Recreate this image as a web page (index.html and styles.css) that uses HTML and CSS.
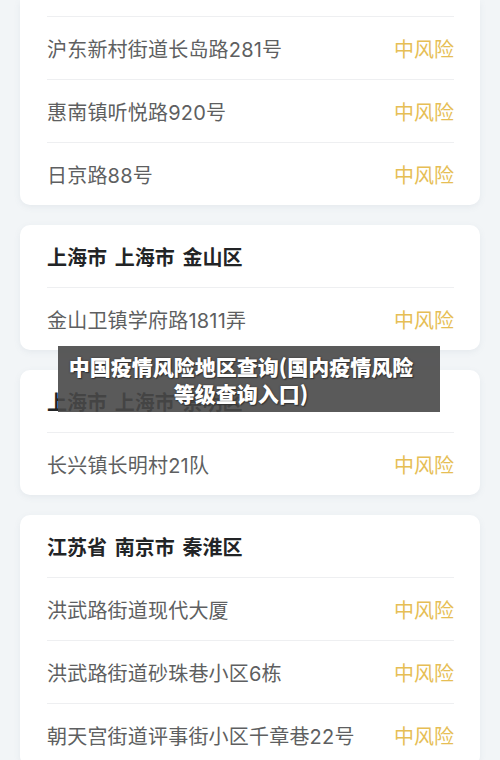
FILE: index.html
```html
<!DOCTYPE html>
<html lang="zh-CN">
<head>
<meta charset="utf-8">
<title>中国疫情风险地区查询</title>
<link rel="stylesheet" href="styles.css">
</head>
<body>
<main class="page">
  <section class="card card-cut">
    <div class="row"><span class="addr">沪东新村街道长岛路281号</span><span class="risk">中风险</span></div>
    <div class="row"><span class="addr">惠南镇听悦路920号</span><span class="risk">中风险</span></div>
    <div class="row"><span class="addr">日京路88号</span><span class="risk">中风险</span></div>
  </section>

  <section class="card">
    <h2 class="region">上海市 上海市 金山区</h2>
    <div class="row"><span class="addr">金山卫镇学府路1811弄</span><span class="risk">中风险</span></div>
  </section>

  <section class="card">
    <h2 class="region">上海市 上海市 崇明区</h2>
    <div class="row"><span class="addr">长兴镇长明村21队</span><span class="risk">中风险</span></div>
  </section>

  <section class="card">
    <h2 class="region">江苏省 南京市 秦淮区</h2>
    <div class="row"><span class="addr">洪武路街道现代大厦</span><span class="risk">中风险</span></div>
    <div class="row"><span class="addr">洪武路街道砂珠巷小区6栋</span><span class="risk">中风险</span></div>
    <div class="row"><span class="addr">朝天宫街道评事街小区千章巷22号</span><span class="risk">中风险</span></div>
  </section>

  <div class="caption">中国疫情风险地区查询(国内疫情风险等级查询入口)</div>
</main>
</body>
</html>
```

FILE: styles.css
```css
html, body {
  margin: 0;
  padding: 0;
  background: #f2f5f7;
}

body {
  font-family: Inter, "Noto Sans CJK SC", "Noto Sans", sans-serif;
  overflow: hidden;
}

.page {
  position: relative;
  display: flex;
  flex-direction: column;
  gap: 20px;
  padding: 0 20px;
  height: 760px;
}

.card {
  background: #ffffff;
  border-radius: 10px;
  box-shadow: 0 2px 6px rgba(120, 140, 160, 0.10);
  flex: none;
}

/* list scrolled so the top of this card is out of view */
.card-cut {
  border-top-left-radius: 0;
  border-top-right-radius: 0;
  padding-top: 16px;
}

.region {
  margin: 0 26px 0 27px;
  height: 62px;
  display: flex;
  align-items: center;
  font-size: 20px;
  font-weight: 700;
  word-spacing: 3px;
  color: #222426;
}

.row {
  margin: 0 26px 0 27px;
  height: 62px;
  display: flex;
  align-items: center;
  justify-content: space-between;
  border-top: 1px solid #eeeff1;
  font-size: 20px;
  letter-spacing: 0.2px;
}

.addr {
  color: #5e5f61;
}

.risk {
  color: #e6be55;
  letter-spacing: 0;
}

.caption {
  position: absolute;
  left: 58px;
  top: 346px;
  width: 382px;
  height: 66px;
  box-sizing: border-box;
  padding: 2px 24px 0 8px;
  display: flex;
  align-items: center;
  justify-content: center;
  text-align: center;
  background: rgba(72, 72, 72, 0.9);
  color: #ffffff;
  font-family: "Noto Sans CJK SC", sans-serif;
  font-size: 21px;
  font-weight: 900;
  line-height: 27px;
  text-shadow: 0 0 2px #333, 1px 1px 1px #333;
}
```
